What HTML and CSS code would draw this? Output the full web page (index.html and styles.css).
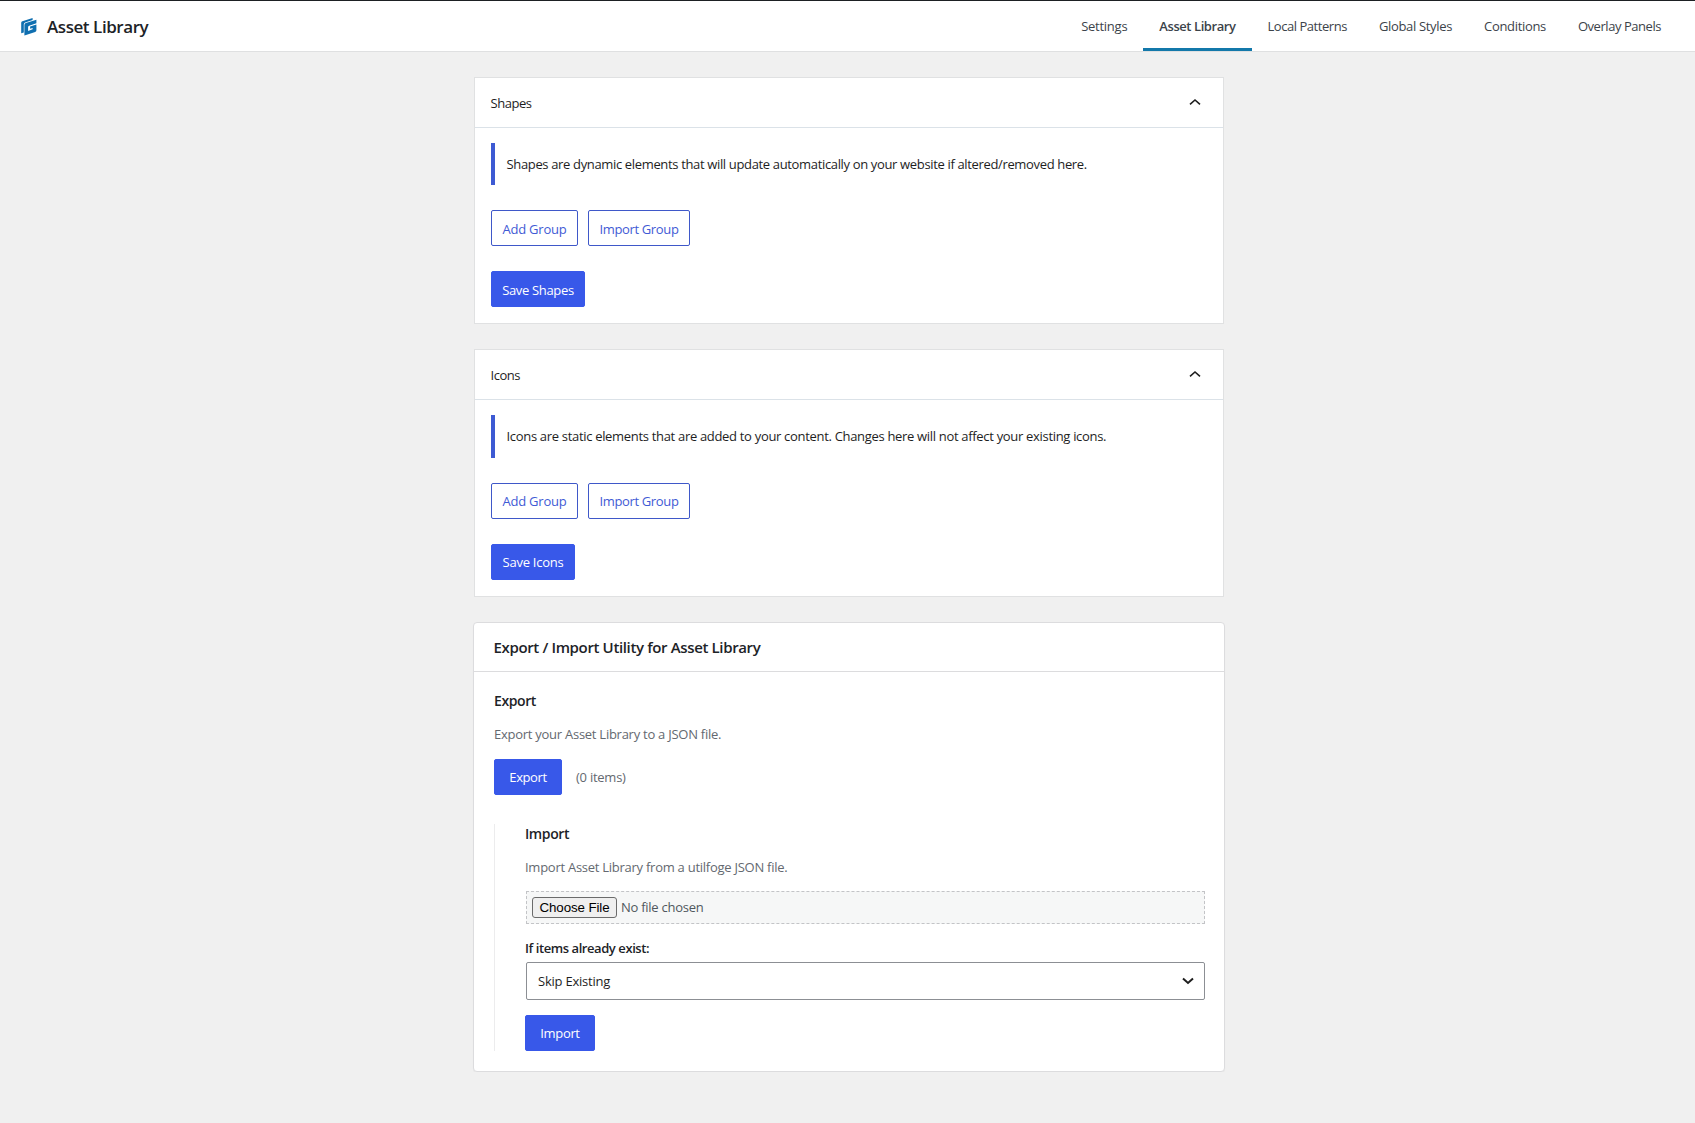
FILE: index.html
```html
<!DOCTYPE html>
<html lang="en">
<head>
<meta charset="utf-8">
<title>Asset Library</title>
<link rel="stylesheet" href="styles.css">
</head>
<body>
<header class="topbar">
  <div class="brand">
    <svg class="logo" width="16" height="18" viewBox="0 0 16 18"><path d="M.2 15.2V4.8Q.2 3.6 1.4 3.2L11.6 0V1.9L4.1 4.5Q2.8 5 2.8 6.4V14.6Z"/><path d="M3.4 17.4V7Q3.4 5.6 4.8 5.1L15.4 1.7V5.2L8.2 7.8Q7.1 8.2 7.1 9.3V12.9L11.6 11.3V9.9L9.1 10.8V8.6L15.4 6.4V12.2Q15.4 13.4 14.2 13.9L5 17.1Z"/></svg>
    <h1 class="brand-name">Asset Library</h1>
  </div>
  <nav class="tabs">
    <a class="tab tab-settings">Settings</a>
    <a class="tab tab-assets active">Asset Library</a>
    <a class="tab tab-patterns">Local Patterns</a>
    <a class="tab tab-styles">Global Styles</a>
    <a class="tab tab-conditions">Conditions</a>
    <a class="tab tab-overlays">Overlay Panels</a>
  </nav>
</header>
<main class="content">
  <section class="panel">
    <div class="panel-head">Shapes
      <svg class="chevron" width="12" height="8" viewBox="0 0 12 8"><path d="M1 6.4 6 2 11 6.4"/></svg>
    </div>
    <div class="panel-body">
      <p class="notice">Shapes are dynamic elements that will update automatically on your website if altered/removed here.</p>
      <div class="actions"><button class="btn outline add">Add Group</button><button class="btn outline import-group">Import Group</button></div>
      <button class="btn primary save-shapes">Save Shapes</button>
    </div>
  </section>
  <section class="panel icons">
    <div class="panel-head">Icons
      <svg class="chevron" width="12" height="8" viewBox="0 0 12 8"><path d="M1 6.4 6 2 11 6.4"/></svg>
    </div>
    <div class="panel-body">
      <p class="notice">Icons are static elements that are added to your content. Changes here will not affect your existing icons.</p>
      <div class="actions"><button class="btn outline add">Add Group</button><button class="btn outline import-group">Import Group</button></div>
      <button class="btn primary save-icons">Save Icons</button>
    </div>
  </section>
  <section class="utility">
    <h2 class="utility-title">Export / Import Utility for Asset Library</h2>
    <div class="utility-body">
      <h3 class="sub">Export</h3>
      <p class="desc">Export your Asset Library to a JSON file.</p>
      <div class="export-row"><button class="btn primary export">Export</button><span class="count">(0 items)</span></div>
      <div class="import-block">
        <h3 class="sub">Import</h3>
        <p class="desc">Import Asset Library from a utilfoge JSON file.</p>
        <div class="file"><button class="choose">Choose File</button><span class="file-name">No file chosen</span></div>
        <label class="label">If items already exist:</label>
        <div class="select">Skip Existing
          <svg class="chevron down" width="12" height="8" viewBox="0 0 12 8"><path d="M1 1.5 6 6 11 1.5"/></svg>
        </div>
        <button class="btn primary import">Import</button>
      </div>
    </div>
  </section>
</main>
</body>
</html>
```
FILE: styles.css
```css
* { box-sizing: border-box; margin: 0; padding: 0; }
body { background: #f0f0f0; color: #1e1e1e; font: 13px/20px "Open Sans", "Noto Sans", sans-serif; }
button { font: inherit; letter-spacing: inherit; }

.topbar { display: flex; justify-content: space-between; height: 52px; border-top: 1px solid #1d2023; border-bottom: 1px solid #dfe0e1; background: #fff; padding: 0 18px 0 21px; }
.brand { display: flex; align-items: center; gap: 10px; }
.logo { margin-top: 2px; fill: #0f6fb0; }
.brand-name { padding-top: 2px; font-size: 17px; font-weight: 560; letter-spacing: -.44px; color: #1d2327; }
.tabs { display: flex; }
.tab { display: flex; align-items: center; padding: 3px 16px 0; color: #3c434a; border-bottom: 3px solid transparent; }
.tab-settings { letter-spacing: -.25px; }
.tab-assets { letter-spacing: -.43px; }
.tab-patterns { letter-spacing: -.46px; }
.tab-styles { letter-spacing: -.33px; }
.tab-conditions { letter-spacing: -.33px; }
.tab-overlays { letter-spacing: -.45px; }
.active { font-weight: 600; border-bottom-color: #1378aa; }

.content { width: 752px; margin: 25px auto 0 473px; }
.panel { height: 247px; margin: 0 1px 25px; border: 1px solid #e0e1e2; background: #fff; }
.icons { height: 248px; }
.panel-head { display: flex; justify-content: space-between; align-items: center; height: 50px; padding: 0 22px 0 15.5px; border-bottom: 1px solid #dbe2e8; letter-spacing: -.45px; }
.chevron { fill: none; stroke: #1e1e1e; stroke-width: 1.6; }
.panel-head .chevron { margin-bottom: 1px; }
.panel-body { padding: 15px 16px; }
.notice { display: flex; align-items: center; height: 42px; padding-left: 11.5px; border-left: 4px solid #3d5ad3; letter-spacing: -.346px; }
.icons .notice { height: 43px; padding-bottom: 2px; letter-spacing: -.315px; }
.actions { display: flex; gap: 10px; margin: 25px 0; }

.btn { display: flex; align-items: center; justify-content: center; height: 36px; padding-top: 2px; border: 1px solid #3858e9; border-radius: 2px; white-space: nowrap; }
.icons .btn, .utility .btn { padding-top: 0; }
.outline { background: #fff; color: #3f5bd5; border-color: #3f58c9; }
.primary { background: #3858e9; color: #fff; }
.add { width: 87px; letter-spacing: -.22px; }
.import-group { width: 102px; letter-spacing: -.36px; }
.save-shapes { width: 94px; letter-spacing: -.33px; }
.save-icons { width: 84px; letter-spacing: -.25px; }
.export { width: 68px; letter-spacing: -.4px; }
.import { width: 70px; letter-spacing: -.35px; }

.utility { height: 450px; border: 1px solid #dcdcde; border-radius: 4px; background: #fff; box-shadow: 0 1px 1px rgba(0,0,0,.04); }
.utility-title { display: flex; align-items: center; height: 49px; padding-left: 19.5px; border-bottom: 1px solid #dcdcde; font-size: 15px; font-weight: 600; letter-spacing: -.36px; color: #1d2327; }
.utility-body { padding: 19px 19px 0 20px; }
.sub { font-size: 14px; font-weight: 600; letter-spacing: -.4px; color: #1d2327; }
.desc { margin-top: 13px; letter-spacing: -.26px; color: #646970; }
.export-row { display: flex; align-items: center; gap: 14px; margin-top: 15px; letter-spacing: -.25px; color: #646970; }
.import-block { height: 227px; margin-top: 29px; padding-left: 30px; border-left: 1px solid #ececed; }
.file { display: flex; align-items: center; gap: 4px; height: 33px; margin: 14px 0 0 1px; padding: 0 0 1px 5px; border: 1px dashed #c3c4c7; background: #f6f7f7; color: #50575e; letter-spacing: -.26px; }
.choose { width: 85px; height: 21px; border: 1px solid #6b6b6b; border-radius: 3px; background: #efefef; font: 13.33px "Liberation Sans", sans-serif; letter-spacing: -.1px; color: #000; }
.label { display: block; margin-top: 14px; font-weight: 600; letter-spacing: -.43px; color: #1d2327; }
.select { display: flex; align-items: center; justify-content: space-between; height: 38px; margin: 4px 0 15px 1px; padding: 0 10px 0 11px; border: 1px solid #8c8f94; border-radius: 2px; letter-spacing: -.22px; }
.down { stroke-width: 2; }
```
